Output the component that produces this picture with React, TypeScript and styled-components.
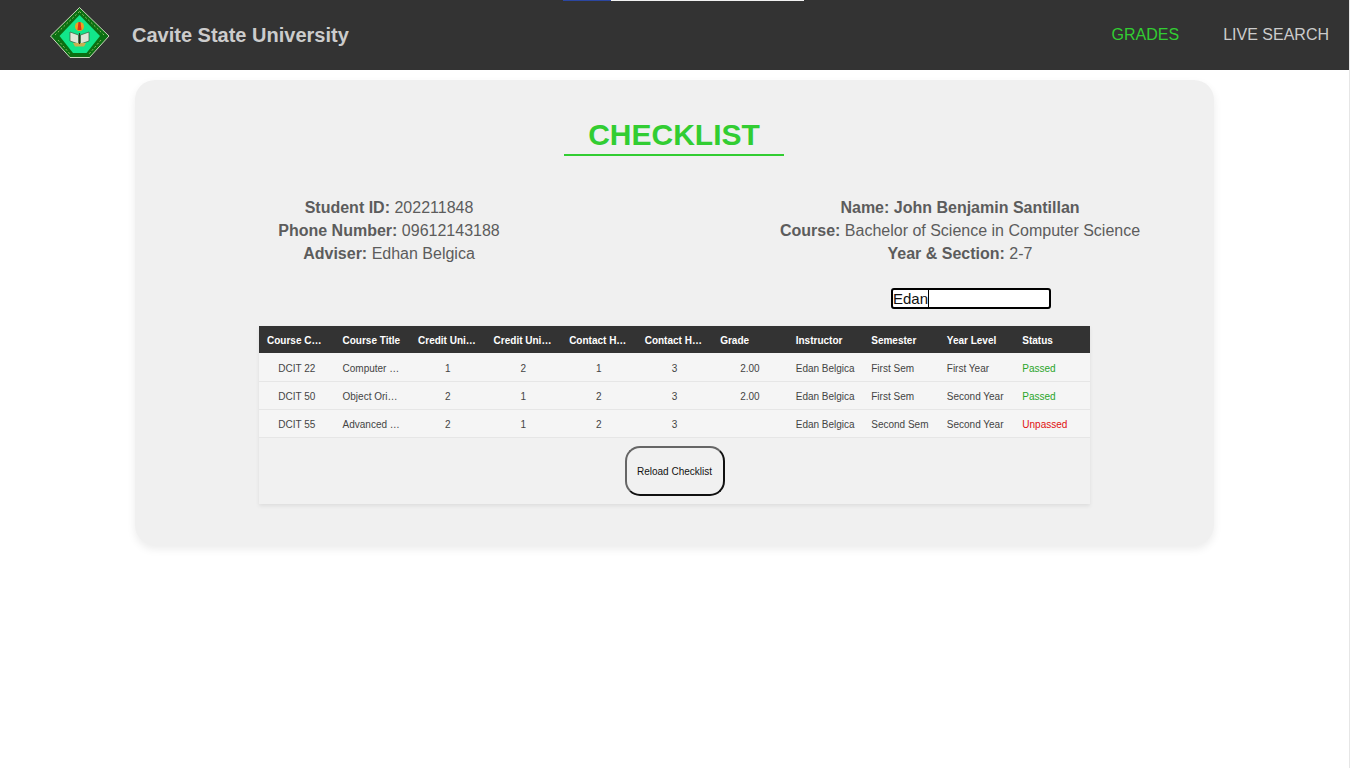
import React from "react";
import styled, { createGlobalStyle } from "styled-components";

const Global = createGlobalStyle`
  html, body { margin: 0; padding: 0; background: #fff; }
  body { font-family: "Liberation Sans", Arial, sans-serif; height: 768px; overflow: hidden; }
`;
const Page = styled.div`
  width: 1349px;
  height: 768px;
  border-right: 1px solid #e6e6e6;
`;
const Nav = styled.header`
  position: relative;
  height: 70px;
  background: #333;
  display: flex;
  align-items: center;
  padding-left: 50px;
`;
const TopStrip = styled.div`
  position: absolute;
  left: 563px;
  top: 0;
  width: 241px;
  height: 1px;
  background: linear-gradient(to right, #2b46a0 0 48px, #f2f2f2 48px);
`;
const LogoMark = styled.svg`
  margin-bottom: 4px;
`;
const Brand = styled.div`
  font-size: 20px;
  font-weight: 700;
  color: #ccc;
  margin-left: 22px;
  margin-top: 1px;
`;
const Links = styled.nav`
  margin-left: auto;
  display: flex;
  gap: 44px;
  padding-right: 20px;
`;
const NavLink = styled.a<{ $active?: boolean }>`
  font-size: 16px;
  color: ${(p) => (p.$active ? "#32cd32" : "#ccc")};
`;
const Card = styled.main`
  width: 1079px;
  height: 465px;
  margin: 10px auto 0;
  box-sizing: border-box;
  background: #f0f0f0;
  border-radius: 20px;
  box-shadow: 0 4px 8px rgba(0, 0, 0, 0.08);
  padding-top: 38px;
  display: flex;
  flex-direction: column;
  align-items: center;
`;
const Title = styled.h1`
  width: 220px;
  box-sizing: border-box;
  margin: 0 1px 0 0;
  height: 38px;
  border-bottom: 2px solid #32cd32;
  color: #32cd32;
  font-family: "Liberation Sans", sans-serif;
  font-size: 30px;
  line-height: 34px;
  font-weight: 700;
  text-align: center;
`;
const Info = styled.section`
  display: grid;
  grid-template-columns: 450px 450px;
  column-gap: 121px;
  margin-top: 40px;
`;
const InfoCol = styled.div`
  text-align: center;
  font-size: 16px;
  line-height: 23px;
  color: #5c5c5c;
`;
const SearchRow = styled.div`
  width: 831px;
  display: flex;
  justify-content: flex-end;
  margin-top: 23px;
  margin-bottom: 17px;
`;
const SearchWrap = styled.div`
  position: relative;
  width: 160px;
  height: 21px;
  margin-right: 39px;
`;
const Search = styled.input`
  width: 160px;
  height: 21px;
  box-sizing: border-box;
  padding: 0;
  border: 2px solid #000;
  border-radius: 3px;
  background: #fff;
  font-family: "Liberation Sans", sans-serif;
  font-size: 15px;
  color: #111;
  outline: none;
  caret-color: transparent;
`;
const Caret = styled.span`
  position: absolute;
  left: 37px;
  top: 2px;
  width: 1px;
  height: 17px;
  background: #000;
`;
const TableBox = styled.div`
  width: 831px;
  height: 178px;
  background: #f1f1f1;
  box-shadow: 0 2px 4px rgba(0, 0, 0, 0.08);
  display: flex;
  flex-direction: column;
  align-items: center;
`;
const Table = styled.table`
  width: 831px;
  table-layout: fixed;
  border-collapse: collapse;
  font-size: 10px;
`;
const Th = styled.th`
  height: 26px;
  padding: 1px 8px 0;
  background: #333;
  color: #fff;
  font-weight: 700;
  text-align: left;
  overflow: hidden;
  white-space: nowrap;
  text-overflow: ellipsis;
`;
const Row = styled.tr`
  border-bottom: 1px solid #e6e6e6;
  background: #f5f5f5;
  &:first-child td {
    height: 26px;
    padding-top: 2px;
  }
`;
const Td = styled.td<{ $center?: boolean; $color?: string }>`
  height: 26px;
  padding: 1px 8px 0;
  color: ${(p) => p.$color ?? "#444"};
  text-align: ${(p) => (p.$center ? "center" : "left")};
  overflow: hidden;
  white-space: nowrap;
  text-overflow: ellipsis;
`;
const Reload = styled.button`
  width: 100px;
  height: 50px;
  margin-top: 8px;
  background: #f1f1f1;
  border: 2px solid;
  border-color: #666 #111 #111 #666;
  border-radius: 15px;
  font-family: "Liberation Sans", sans-serif;
  font-size: 10px;
  color: #111;
  padding: 0;
`;

const Logo = () => (
  <LogoMark width="60" height="52" viewBox="0 0 60 52">
    <path d="M29.500 .5 59 29 39.500 50.500H20L.5 29Z" fill="#0b6f12" stroke="#dfe8cf" strokeWidth="0.9" />
    <path d="M29.500 8 50 29 36.500 46H23L9.500 29Z" fill="#12e68a" />
    <path d="M29.500 4.500 54 28M29.500 4.500 5 28M8 33 20 47M51 33 39 47" stroke="#8fbf60" strokeWidth="1" strokeDasharray="2 2" fill="none" />
    <circle cx="29.500" cy="19.500" r="4.500" fill="#f0a020" />
    <path d="M27.500 23h4l-1-8h-2z" fill="#d8301c" />
    <path d="M20 25l8.500 3v9l-8.500-3zM39 25l-8.500 3v9l8.500-3z" fill="#dfe6d8" stroke="#3a5a3a" strokeWidth="0.7" />
    <path d="M23 36h13l-2 3.500H25z" fill="#c8b050" />
    <path d="M29.500 26v11" stroke="#2c2c1c" strokeWidth="1.200" />
  </LogoMark>
);

const headers = ["Course Code", "Course Title", "Credit Unit Lec", "Credit Unit Lab", "Contact Hrs Lec", "Contact Hrs Lab", "Grade", "Instructor", "Semester", "Year Level", "Status"];
const rows = [
  ["DCIT 22", "Computer Programming 1", "1", "2", "1", "3", "2.00", "First Sem", "First Year", "Passed"],
  ["DCIT 50", "Object Oriented Programming", "2", "1", "2", "3", "2.00", "First Sem", "Second Year", "Passed"],
  ["DCIT 55", "Advanced Database", "2", "1", "2", "3", "", "Second Sem", "Second Year", "Unpassed"],
];

export default function App() {
  return (
    <Page>
      <Global />
      <Nav>
        <TopStrip />
        <Logo />
        <Brand>Cavite State University</Brand>
        <Links>
          <NavLink $active>GRADES</NavLink>
          <NavLink>LIVE SEARCH</NavLink>
        </Links>
      </Nav>
      <Card>
        <Title>CHECKLIST</Title>
        <Info>
          <InfoCol>
            <div><b>Student ID:</b> 202211848</div>
            <div><b>Phone Number:</b> 09612143188</div>
            <div><b>Adviser:</b> Edhan Belgica</div>
          </InfoCol>
          <InfoCol>
            <div><b>Name: John Benjamin Santillan</b></div>
            <div><b>Course:</b> Bachelor of Science in Computer Science</div>
            <div><b>Year &amp; Section:</b> 2-7</div>
          </InfoCol>
        </Info>
        <SearchRow>
          <SearchWrap>
            <Search defaultValue="Edan" />
            <Caret />
          </SearchWrap>
        </SearchRow>
        <TableBox>
          <Table>
            <thead>
              <tr>{headers.map((h) => <Th key={h}>{h}</Th>)}</tr>
            </thead>
            <tbody>
              {rows.map((r) => (
                <Row key={r[0]}>
                  <Td $center>{r[0]}</Td>
                  <Td>{r[1]}</Td>
                  <Td $center>{r[2]}</Td>
                  <Td $center>{r[3]}</Td>
                  <Td $center>{r[4]}</Td>
                  <Td $center>{r[5]}</Td>
                  <Td $center>{r[6]}</Td>
                  <Td>Edan Belgica</Td>
                  <Td>{r[7]}</Td>
                  <Td>{r[8]}</Td>
                  <Td $color={r[9] === "Passed" ? "#2aa52a" : "#e01010"}>{r[9]}</Td>
                </Row>
              ))}
            </tbody>
          </Table>
          <Reload>Reload Checklist</Reload>
        </TableBox>
      </Card>
    </Page>
  );
}
